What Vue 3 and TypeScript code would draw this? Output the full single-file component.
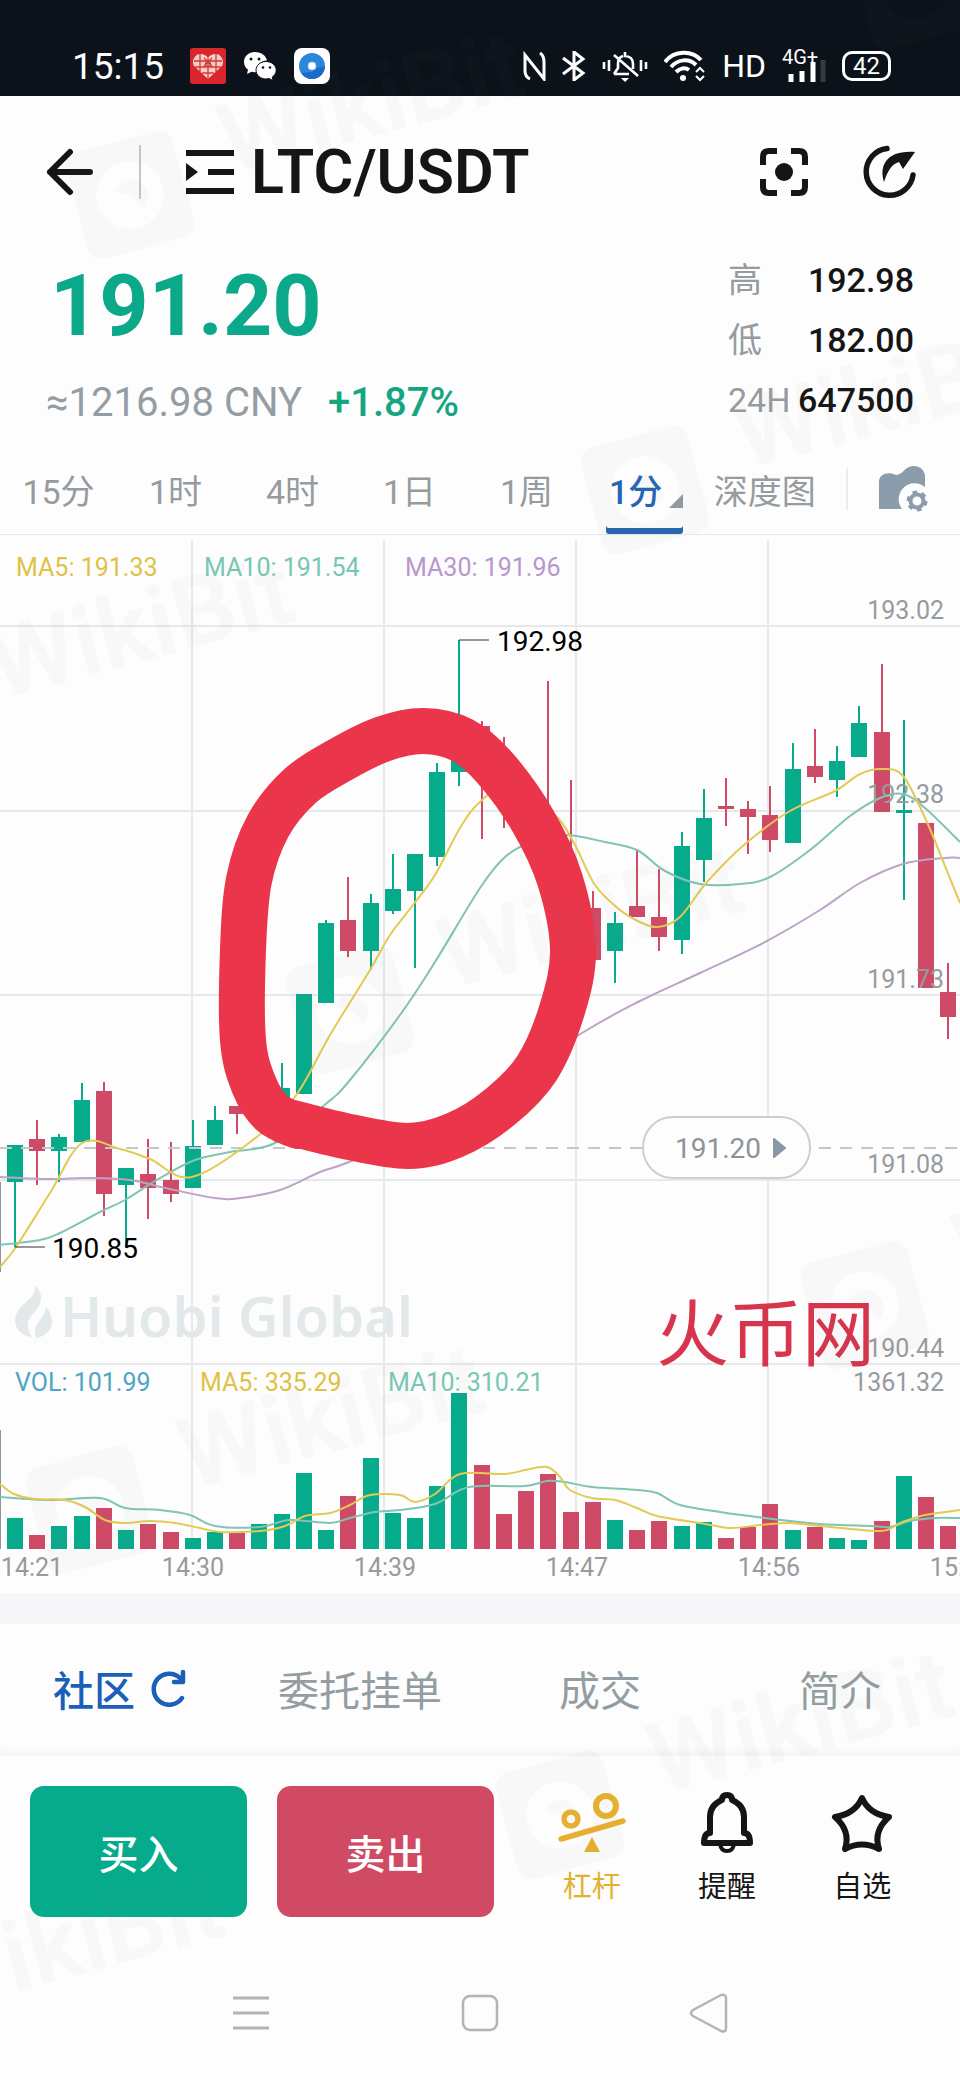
<script setup lang="ts">
import { ref } from 'vue'

type Point = [number, number]

interface Candle {
  up: boolean
  high: number
  top: number
  bottom: number
  low: number
  volume: number
}

const periods = ['15分', '1时', '4时', '1日', '1周']
const activePeriod = ref('1分')
const sections = ['社区', '委托挂单', '成交', '简介']
const activeSection = ref('社区')

const stats = [
  { label: '高', value: '192.98' },
  { label: '低', value: '182.00' },
  { label: '24H', value: '647500' },
]

// direction, high, body top, body bottom, low, top of the volume bar
const rows: [number, number, number, number, number, number][] = [
  [1, 1145, 1145, 1182, 1247, 1518],
  [0, 1120, 1139, 1151, 1185, 1535],
  [1, 1134, 1137, 1151, 1182, 1526],
  [1, 1083, 1100, 1142, 1142, 1516],
  [0, 1082, 1091, 1194, 1216, 1508],
  [1, 1168, 1168, 1185, 1247, 1530],
  [0, 1139, 1174, 1188, 1219, 1524],
  [0, 1142, 1180, 1194, 1202, 1532],
  [1, 1120, 1146, 1188, 1188, 1538],
  [1, 1106, 1120, 1145, 1145, 1532],
  [0, 1106, 1106, 1114, 1134, 1533],
  [1, 1100, 1104, 1114, 1118, 1524],
  [1, 1063, 1088, 1103, 1103, 1514],
  [1, 994, 994, 1094, 1094, 1473],
  [1, 920, 923, 1003, 1003, 1530],
  [0, 877, 920, 951, 957, 1496],
  [1, 894, 903, 951, 970, 1458],
  [1, 854, 889, 911, 914, 1513],
  [1, 854, 854, 891, 968, 1518],
  [1, 763, 772, 857, 866, 1486],
  [1, 640, 758, 772, 786, 1393],
  [0, 721, 726, 748, 839, 1465],
  [0, 737, 760, 780, 828, 1514],
  [0, 780, 785, 800, 810, 1491],
  [0, 681, 825, 840, 845, 1474],
  [0, 780, 870, 890, 895, 1512],
  [0, 891, 908, 960, 960, 1502],
  [1, 912, 923, 951, 983, 1520],
  [0, 849, 906, 917, 917, 1530],
  [0, 869, 917, 937, 951, 1521],
  [1, 832, 846, 940, 954, 1526],
  [1, 789, 818, 860, 882, 1522],
  [0, 778, 806, 809, 826, 1538],
  [0, 801, 809, 817, 854, 1527],
  [0, 786, 815, 840, 852, 1504],
  [1, 743, 769, 843, 843, 1530],
  [0, 729, 766, 777, 783, 1527],
  [1, 746, 761, 780, 797, 1538],
  [1, 706, 723, 757, 757, 1540],
  [0, 664, 732, 812, 812, 1521],
  [1, 720, 810, 813, 900, 1476],
  [0, 823, 823, 988, 988, 1497],
  [0, 963, 992, 1017, 1039, 1526],
]
const candles: Candle[] = rows.map(([up, high, top, bottom, low, volume]) => ({
  up: up === 1, high, top, bottom, low, volume,
}))
const volumeBase = 1549
const centre = (i: number) => Math.round(15 + i * 22.22)

const gridX = [192, 384, 576, 768]
const gridY = [534, 626, 811, 995, 1180, 1364]

// Catmull-Rom interpolation through the given points
function curve(p: Point[]): string {
  let d = `M${p[0][0]} ${p[0][1]}`
  for (let i = 0; i < p.length - 1; i++) {
    const a = p[Math.max(i - 1, 0)]
    const b = p[i]
    const c = p[i + 1]
    const e = p[Math.min(i + 2, p.length - 1)]
    d += `C${b[0] + (c[0] - a[0]) / 6} ${b[1] + (c[1] - a[1]) / 6} ${c[0] - (e[0] - b[0]) / 6} ${c[1] - (e[1] - b[1]) / 6} ${c[0]} ${c[1]}`
  }
  return d
}

const ma5 = curve([[0, 1267], [16, 1247], [50, 1193], [82, 1143], [120, 1149], [150, 1159], [192, 1177], [258, 1136], [297, 1094], [330, 1035], [370, 970], [390, 935], [413, 905], [435, 875], [460, 828], [480, 802], [510, 785], [555, 815], [575, 845], [595, 885], [620, 910], [640, 922], [658, 927], [680, 917], [707, 882], [745, 844], [790, 811], [835, 791], [860, 774], [882, 769], [903, 776], [926, 820], [945, 866], [960, 903]])
const ma10 = curve([[0, 1245], [40, 1240], [60, 1233], [100, 1212], [125, 1200], [160, 1178], [195, 1160], [230, 1152], [275, 1143], [327, 1103], [350, 1080], [400, 1015], [435, 962], [480, 888], [505, 857], [530, 843], [565, 835], [605, 842], [637, 850], [665, 871], [700, 884], [740, 884], [770, 877], [810, 850], [850, 816], [880, 798], [903, 794], [925, 808], [960, 842]])
const ma30 = curve([[0, 1177], [50, 1179], [90, 1178], [130, 1180], [165, 1188], [215, 1198], [240, 1198], [280, 1190], [320, 1172], [356, 1159], [460, 1110], [582, 1033], [640, 1001], [700, 973], [765, 942], [820, 910], [860, 883], [903, 864], [945, 858], [960, 858]])
const vol5 = curve([[0, 1484], [14, 1494], [35, 1499], [65, 1500], [85, 1507], [105, 1520], [125, 1523], [150, 1521], [175, 1523], [200, 1528], [220, 1532], [260, 1531], [285, 1526], [305, 1516], [330, 1513], [350, 1505], [370, 1495], [400, 1495], [415, 1502], [435, 1494], [460, 1474], [505, 1474], [525, 1470], [547, 1467], [560, 1477], [570, 1490], [592, 1498], [615, 1500], [637, 1508], [657, 1516], [700, 1523], [730, 1528], [760, 1525], [790, 1523], [820, 1526], [880, 1531], [900, 1523], [925, 1515], [960, 1510]])
const vol10 = curve([[0, 1497], [50, 1500], [100, 1498], [125, 1508], [160, 1510], [190, 1515], [215, 1526], [260, 1527], [290, 1520], [330, 1523], [350, 1518], [375, 1512], [400, 1510], [435, 1504], [460, 1490], [480, 1486], [525, 1486], [547, 1481], [565, 1482], [592, 1487], [637, 1490], [657, 1493], [680, 1505], [720, 1512], [765, 1518], [820, 1524], [870, 1526], [890, 1527], [910, 1521], [935, 1518], [960, 1518]])
const loop = curve([[285, 1121], [345, 1136], [408, 1146], [455, 1135], [500, 1107], [537, 1068], [562, 1010], [573, 950], [560, 880], [533, 821], [495, 768], [462, 740], [423, 731], [383, 739], [340, 760], [300, 786], [268, 826], [249, 880], [243, 950], [243, 1040], [254, 1085], [272, 1113], [298, 1126]])

const texts = [
  { x: 16, y: 576, cls: 'gold', text: 'MA5: 191.33' },
  { x: 204, y: 576, cls: 'mint', text: 'MA10: 191.54' },
  { x: 405, y: 576, cls: 'violet', text: 'MA30: 191.96' },
  { x: 15, y: 1391, cls: 'azure', text: 'VOL: 101.99' },
  { x: 200, y: 1391, cls: 'gold', text: 'MA5: 335.29' },
  { x: 388, y: 1391, cls: 'mint', text: 'MA10: 310.21' },
]
const scale = [
  { y: 619, text: '193.02' },
  { y: 803, text: '192.38' },
  { y: 988, text: '191.73' },
  { y: 1173, text: '191.08' },
  { y: 1357, text: '190.44' },
  { y: 1391, text: '1361.32' },
]
const times = [
  { x: 32, text: '14:21' },
  { x: 193, text: '14:30' },
  { x: 385, text: '14:39' },
  { x: 577, text: '14:47' },
  { x: 769, text: '14:56' },
  { x: 961, text: '15:05' },
]

const marks: Point[] = [[130, 195], [645, 490], [-100, 720], [350, 1010], [865, 1305], [90, 1510], [560, 1815], [-170, 2035], [915, -15]]
</script>

<template>
  <div class="page">
    <header class="status">
      <time class="clock">15:15</time>
      <div class="apps">
        <svg width="36" height="36" viewBox="0 0 36 36" aria-hidden="true">
          <rect width="36" height="36" rx="3" fill="#d8262c" />
          <path d="M18 31 4 18C1 13 5 6 10 6c4 0 6 1 8 4 2-3 4-4 8-4 5 0 9 7 6 12Z" fill="#f6cfc6" />
          <path d="M10 6v18M26 6v18M18 10v21M4 13h28M5 19h26M12 25h12M14 10l8 8M22 10l-8 8" stroke="#cf3a36" stroke-width="1.3" fill="none" />
          <circle cx="18" cy="16" r="2.5" fill="none" stroke="#cf3a36" stroke-width="1.2" />
        </svg>
        <svg width="34" height="30" viewBox="0 0 34 30" aria-hidden="true">
          <path d="M12 1C5.400 1 1 5.500 1 11c0 3.500 1.700 6 4 7.800L4 23l4.500-2.200 3.500.5 2-.1A10 10 0 0 1 24 9.500C23 4.500 18 1 12 1Z" fill="#fff" />
          <path d="M23 10.500c-5.500 0-10 3.700-10 8.700S17.500 28 23 28l3-.5 4 2-.8-3.500c2.500-1.600 4-4 4-6.800 0-5-4.700-8.700-10.200-8.700Z" fill="#fff" stroke="#0b1219" />
          <g fill="#0b1219"><circle cx="8" cy="8" r="1.500" /><circle cx="16" cy="8" r="1.500" /><circle cx="20" cy="16.500" r="1.300" /><circle cx="27" cy="16.500" r="1.300" /></g>
        </svg>
        <svg width="36" height="36" viewBox="0 0 36 36" aria-hidden="true">
          <rect width="36" height="36" rx="8" fill="#fff" />
          <circle cx="18" cy="18" r="13" fill="#2c86dc" />
          <path d="M7 25a13 13 0 0 0 24-7l-9 2-4 4Z" fill="#1b6cc8" />
          <circle cx="18" cy="18" r="4" fill="#fff" stroke="#a9d4f5" />
        </svg>
      </div>
      <div class="signals">
        <svg width="23" height="30" viewBox="0 0 23 30" fill="none" stroke="#fff" stroke-width="3" aria-label="NFC">
          <path d="M7 28c-4-2-5-4-5-8V4l19 24V11c0-5-1-7-4-9" />
        </svg>
        <svg width="24" height="30" viewBox="0 0 24 30" fill="none" stroke="#fff" stroke-width="3" aria-label="蓝牙">
          <path d="M1 7l20 15-9 7V1l9 7L1 23" />
        </svg>
        <svg width="46" height="32" viewBox="0 0 46 32" fill="none" stroke="#fff" stroke-width="2.600" aria-label="振动">
          <path d="M2 12v7M7 10v11M39 10v11M44 12v7M12 24h15M12 24l4-6v-5c0-3 2-6 5-7M23 2v4c5 0 8 3 8 8v5M12 5l24 21" />
          <path d="M19 28h8l-4 4Z" fill="#fff" stroke="none" />
        </svg>
        <svg width="42" height="32" viewBox="0 0 42 32" fill="none" stroke="#fff" stroke-width="4" aria-label="无线网络">
          <path d="M1 12C10 0 28 0 37 10M7 17c7-8 18-9 25-2M12 22c4-4 9-5 13-2" />
          <circle cx="19" cy="28" r="3" fill="#fff" stroke="none" />
          <path d="M32 22l4-4 4 4M32 26l4 4 4-4" stroke-width="2" />
        </svg>
        <span class="hd">HD</span>
        <span class="cell">
          <span>4G+</span>
          <svg width="46" height="22" viewBox="0 0 46 22" aria-hidden="true">
            <path d="M9 22v-8M20 22V11M31 22V2" stroke="#fff" stroke-width="5" /><path d="M41 22V-8" stroke="#343c43" stroke-width="5" />
          </svg>
        </span>
        <span class="battery">42</span>
      </div>
    </header>

    <nav class="top">
      <button class="icon" aria-label="返回">
        <svg width="48" height="48" viewBox="0 0 48 48" fill="none" stroke="#151515" stroke-width="6" stroke-linecap="round" stroke-linejoin="round"><path d="M24 4 4 24l20 20M4 24h40" /></svg>
      </button>
      <span class="rule"></span>
      <button class="pair">
        <svg width="48" height="48" viewBox="0 0 48 48" aria-hidden="true"><path d="M0 5h48M22 24h26M0 43h48" stroke="#151515" stroke-width="6" /><path d="M0 15l12 9-12 9Z" fill="#151515" /></svg>
        <h1>LTC/USDT</h1>
      </button>
      <button class="icon focus" aria-label="全屏">
        <svg width="48" height="48" viewBox="0 0 48 48" fill="none" stroke="#151515" stroke-width="6"><path d="M3 17V9q0-6 6-6h8M31 3h8q6 0 6 6v8M45 31v8q0 6-6 6h-8M17 45H9q-6 0-6-6v-8" /><circle cx="24" cy="24" r="9" fill="#151515" stroke="none" /></svg>
      </button>
      <button class="icon" aria-label="分享">
        <svg width="56" height="56" viewBox="0 0 56 56" fill="none"><path d="M25 4.500A23.500 23.500 0 1 0 51 31" stroke="#151515" stroke-width="5.500" stroke-linecap="round" /><path d="M53 8 41 25l-4-7c-7 2-11 8-15 20C17 22 24 6 53 8Z" fill="#151515" /></svg>
      </button>
    </nav>

    <section class="quote">
      <div>
        <p class="price">191.20</p>
        <p class="sub"><span>≈1216.98 CNY</span><strong>+1.87%</strong></p>
      </div>
      <dl class="stats">
        <div v-for="s in stats" :key="s.label"><dt>{{ s.label }}</dt><dd>{{ s.value }}</dd></div>
      </dl>
    </section>

    <nav class="periods">
      <div class="common">
        <button v-for="p in periods" :key="p" :class="{ on: p === activePeriod }" @click="activePeriod = p">{{ p }}</button>
      </div>
      <div class="more">
        <button class="minute" :class="{ on: activePeriod === '1分' }" @click="activePeriod = '1分'">1分<i class="corner"></i></button>
        <button>深度图</button>
        <span class="rule"></span>
        <button class="icon" aria-label="图表设置">
          <svg width="50" height="48" viewBox="0 0 50 48">
            <path d="M0 44V17C0 9 9 6 17 10 24 10 26 1 34 1q10 0 12 9v12A16 16 0 0 0 23 44Z" fill="#8b9cad" />
            <circle cx="38" cy="36" r="6.500" fill="none" stroke="#8b9cad" stroke-width="4" />
            <circle cx="38" cy="36" r="9" fill="none" stroke="#8b9cad" stroke-width="3" stroke-dasharray="4.700 4.700" />
          </svg>
        </button>
      </div>
    </nav>

    <svg class="chart" viewBox="0 534 960 1059" role="img" aria-label="LTC/USDT 1分 K线图">
      <g class="grid">
        <line v-for="x in gridX" :key="x" :x1="x" :x2="x" y1="540" y2="1549" />
        <line v-for="y in gridY" :key="y" x1="0" x2="960" :y1="y" :y2="y" />
      </g>
      <g class="brand">
        <path d="M35 1285c12 13 4 22-3 30-6 7-5 14 0 22-20-3-21-22-9-32 7-6 13-11 12-20ZM46 1307c10 11 8 28-10 31-2-8-1-13 4-18 3-4 5-8 6-13Z" />
        <text x="60" y="1337">Huobi Global</text>
      </g>
      <path d="M0 1182v90M0 1430v119" stroke="#8f9499" stroke-width="2" />
      <g v-for="(c, i) in candles" :key="i" :class="c.up ? 'up' : 'down'">
        <line :x1="centre(i)" :x2="centre(i)" :y1="c.high" :y2="c.low" />
        <rect :x="centre(i) - 8" :y="c.top" width="16" :height="c.bottom - c.top" />
        <rect :x="centre(i) - 8" :y="c.volume" width="16" :height="volumeBase - c.volume" />
      </g>
      <text v-for="s in scale" :key="s.text" class="label" x="944" :y="s.y" text-anchor="end">{{ s.text }}</text>
      <path class="now" d="M0 1148H960" />
      <path class="line l30" :d="ma30" />
      <path class="line l10" :d="ma10" />
      <path class="line l5" :d="ma5" />
      <path class="line l10" :d="vol10" />
      <path class="line l5" :d="vol5" />
      <path d="M459 640h30M15 1247h30" stroke="#333" stroke-width="1" fill="none" />
      <text class="peak" x="497" y="651">192.98</text>
      <text class="peak" x="52" y="1258">190.85</text>
      <text v-for="t in texts" :key="t.x + t.text" :class="t.cls" :x="t.x" :y="t.y">{{ t.text }}</text>
      <text v-for="t in times" :key="t.text" class="label" :x="t.x" y="1576" text-anchor="middle">{{ t.text }}</text>
      <rect x="643" y="1117" width="167" height="61" rx="30" fill="#fdfdfd" stroke="#cccfd1" stroke-width="2" />
      <text class="pill" x="675" y="1158">191.20</text>
      <path d="M774 1139l11 9-11 9Z" fill="#8b97a3" stroke="#8b97a3" stroke-width="2" stroke-linejoin="round" />
      <path class="loop" :d="loop" />
      <text class="note" x="656" y="1360">火币网</text>
    </svg>

    <nav class="sections">
      <button v-for="s in sections" :key="s" :class="{ on: s === activeSection }" @click="activeSection = s">
        {{ s }}
        <svg v-if="s === '社区'" width="36" height="38" viewBox="0 0 36 38" fill="none" stroke="#1c5fb8" stroke-width="4.500" stroke-linecap="round" stroke-linejoin="round" aria-hidden="true"><path d="M31 29A15.500 15.500 0 1 1 29 9M32 3v10H23" /></svg>
      </button>
    </nav>

    <section class="actions">
      <button class="trade buy">买入</button>
      <button class="trade sell">卖出</button>
      <div class="tools">
        <button class="lever">
          <svg width="68" height="64" viewBox="0 0 68 64" fill="none" stroke="#e8b02f" stroke-width="5.500"><circle cx="13" cy="29" r="7" /><circle cx="48" cy="16" r="10" stroke-width="6" /><path d="M3 49 65 31" stroke-linecap="round" /><path d="m34 47 8 15H26Z" fill="#e8b02f" stroke="none" /></svg>
          杠杆
        </button>
        <button>
          <svg width="68" height="64" viewBox="0 0 68 64" fill="none" stroke="#151515" stroke-width="6" stroke-linejoin="round"><path d="M17 43V27q0-12 12-17 0-5 5-5t5 5q12 5 12 17v16q6 0 6 10H11q0-10 6-10Z" /><path d="M27 54q1 7 7 7t7-7" stroke-width="4" /></svg>
          提醒
        </button>
        <button>
          <svg width="68" height="64" viewBox="0 0 68 64" fill="none" stroke="#151515" stroke-width="6" stroke-linejoin="round"><path d="M34 8q7 16 27 19-16 14-10 32-17-9-34 0 6-18-10-32 20-3 27-19Z" /></svg>
          自选
        </button>
      </div>
    </section>

    <nav class="system">
      <button aria-label="最近任务"><svg width="40" height="40" viewBox="0 0 40 40" fill="none" stroke="#b4b4b4" stroke-width="3"><path d="M2 5h36M2 20h36M2 35h36" /></svg></button>
      <button aria-label="主屏幕"><svg width="40" height="40" viewBox="0 0 40 40" fill="none" stroke="#b4b4b4" stroke-width="2.500"><rect x="3" y="3" width="34" height="34" rx="7" /></svg></button>
      <button aria-label="后退"><svg width="40" height="40" viewBox="0 0 40 40" fill="none" stroke="#b4b4b4" stroke-width="2.500" stroke-linejoin="round"><path d="M4 17 32 2q5-1 5 3v30q0 5-5 3L4 23q-4-3 0-6Z" /></svg></button>
    </nav>

    <svg class="marks" viewBox="0 0 960 2080" preserveAspectRatio="xMidYMin slice" aria-hidden="true">
      <g v-for="([x, y], i) in marks" :key="i" :transform="`translate(${x} ${y}) rotate(-15)`">
        <path fill-rule="evenodd" d="M-38-55h76q17 0 17 17v76q0 17-17 17h-76q-17 0-17-17v-76q0-17 17-17ZM0-34a34 34 0 1 0 .1 0ZM-14-8q14-14 28 0 10 16-6 26 2-14-22-26Z" />
        <text x="102" y="6">WikiBit</text>
      </g>
    </svg>
  </div>
</template>

<style>
body {
  margin: 0;
  background: #fdfdfd;
}
</style>

<style scoped>
.page {
  position: relative;
  overflow: hidden;
  background: #fdfdfd;
  color: #151515;
  font-family: Roboto, "Noto Sans CJK SC", sans-serif;
}
button {
  padding: 0;
  border: 0;
  background: none;
  color: inherit;
  font: inherit;
  cursor: pointer;
}
svg {
  display: block;
  flex: none;
}
p, h1, dl, dd {
  margin: 0;
}

.status {
  display: flex;
  align-items: center;
  box-sizing: border-box;
  height: 96px;
  padding: 36px 69px 0 72px;
  background: #0b1219;
  color: #fff;
}
.clock {
  width: 118px;
  font-size: 37px;
}
.apps {
  display: flex;
  align-items: center;
  gap: 17px;
}
.signals {
  display: flex;
  align-items: center;
  gap: 16px;
  margin-left: auto;
}
.hd {
  font-size: 32px;
}
.cell {
  display: grid;
  width: 44px;
  font-size: 20px;
  line-height: 14px;
}
.cell svg {
  margin-top: -4px;
}
.battery {
  box-sizing: border-box;
  width: 49px;
  border: 3px solid #fff;
  border-radius: 10px;
  font-size: 24px;
  line-height: 24px;
  text-align: center;
}

.top {
  display: flex;
  align-items: center;
  height: 152px;
  padding: 0 42px 0 46px;
}
.rule {
  width: 2px;
  height: 54px;
  background: #c4c6c8;
}
.top .rule {
  margin: 0 45px;
}
.pair {
  display: flex;
  align-items: center;
  gap: 17px;
}
h1 {
  font-size: 61px;
  font-weight: 600;
  line-height: 76px;
}
.focus {
  margin: 0 54px 0 auto;
}

.quote {
  display: flex;
  justify-content: space-between;
  padding: 2px 46px 0 46px;
}
.price {
  padding-left: 4px;
  color: #0ba88a;
  font-size: 86px;
  font-weight: 700;
  line-height: 112px;
}
.sub {
  display: flex;
  gap: 26px;
  color: #959da4;
  font-size: 40px;
  line-height: 82px;
}
.sub strong {
  color: #16a583;
  font-weight: 500;
}
.stats {
  width: 186px;
}
.stats div {
  display: flex;
  justify-content: space-between;
  font-size: 34px;
  line-height: 60px;
  white-space: nowrap;
}
.stats dt {
  color: #959b9f;
}
.stats dd {
  font-weight: 500;
}

.periods {
  display: grid;
  grid-template-columns: 585fr 375fr;
  height: 90px;
  color: #959b9f;
  font-size: 34px;
}
.common {
  display: grid;
  grid-template-columns: repeat(5, 1fr);
}
.more {
  display: flex;
  align-items: stretch;
  justify-content: space-between;
  padding: 0 31px 0 21px;
}
.more button {
  display: flex;
  align-items: center;
}
.periods .on {
  color: #2566b4;
  font-weight: 500;
}
.periods .minute {
  box-sizing: border-box;
  width: 77px;
  padding-left: 3px;
}
.periods .minute.on {
  border-radius: 3px;
  box-shadow: inset 0 -6px 0 #2566b4;
}
.corner {
  width: 14px;
  height: 14px;
  margin: 24px 0 0 auto;
  background: #9299a0;
  clip-path: polygon(100% 0, 100% 100%, 0 100%);
}
.periods .rule {
  align-self: center;
  height: 42px;
  background: #ececed;
}

.chart {
  width: 100%;
  font-size: 25px;
}
.grid line {
  stroke: #e7e8e9;
  stroke-width: 2;
}
.brand {
  fill: #e3e8ea;
}
.brand text {
  font-family: "Noto Sans", sans-serif;
  font-size: 56px;
  font-weight: 600;
}
.label {
  fill: #969b9f;
}
.up {
  fill: #06ab8c;
  stroke: #06ab8c;
}
.down {
  fill: #cf4a66;
  stroke: #cf4a66;
}
.up line, .down line {
  stroke-width: 2;
}
.up rect, .down rect {
  stroke: none;
}
.now {
  stroke: #c3c8ca;
  stroke-width: 2;
  stroke-dasharray: 12 9;
}
.line {
  fill: none;
  stroke-width: 2;
}
.l5 {
  stroke: #e2ca55;
}
.l10 {
  stroke: #7fc4b4;
}
.l30 {
  stroke: #bda3c6;
}
.peak {
  font-size: 28px;
  fill: #000;
}
.pill {
  font-size: 28px;
  fill: #8d9397;
}
.gold {
  fill: #dfc245;
}
.mint {
  fill: #78c7b3;
}
.violet {
  fill: #b996cf;
}
.azure {
  fill: #4fa5c2;
}
.loop {
  fill: none;
  stroke: #eb354b;
  stroke-width: 46;
  stroke-linecap: round;
}
.note {
  fill: #d6354d;
  font-size: 73px;
}

.sections {
  display: grid;
  grid-template-columns: repeat(4, 1fr);
  height: 132px;
  border-top: 31px solid #f7f7f9;
  box-shadow: inset 0 -8px 6px -3px #f4f4f5;
  color: #949da2;
  font-size: 41px;
}
.sections button {
  display: flex;
  align-items: center;
  justify-content: center;
  gap: 16px;
  padding-bottom: 4px;
}
.sections .on {
  color: #1c5fb8;
  font-weight: 500;
}

.actions {
  display: grid;
  grid-template-columns: 217fr 217fr 406fr;
  gap: 30px;
  padding: 30px;
}
.trade {
  height: 131px;
  border-radius: 14px;
  color: #fff;
  font-size: 40px;
  font-weight: 500;
}
.buy {
  background: #06ab8c;
}
.sell {
  background: #cf4a62;
}
.tools {
  display: grid;
  grid-template-columns: repeat(3, 1fr);
}
.tools button {
  display: flex;
  flex-direction: column;
  align-items: center;
  gap: 15px;
  padding-top: 4px;
  font-size: 29px;
  line-height: 36px;
}
.tools .lever {
  color: #e2b22f;
}

.system {
  display: flex;
  align-items: center;
  justify-content: center;
  gap: 189px;
  height: 132px;
}

.marks {
  position: absolute;
  inset: 0;
  width: 100%;
  height: 100%;
  pointer-events: none;
  fill: #808080;
  opacity: 0.03;
}
.marks text {
  font-size: 98px;
  font-weight: 600;
}
</style>
